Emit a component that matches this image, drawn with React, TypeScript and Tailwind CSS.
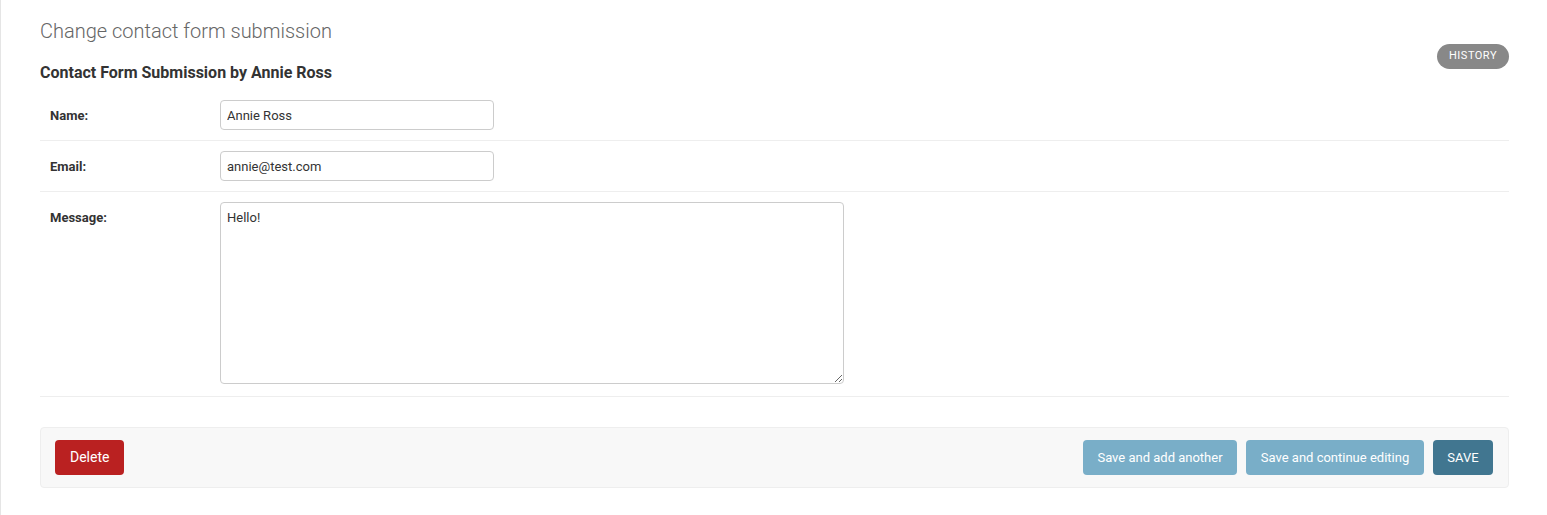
import React from "react";

export default function App() {
  const font = { fontFamily: "Roboto, 'Liberation Sans', sans-serif" };
  return (
    <div
      className="min-h-[515px] bg-white border-l border-[#e5e5e5] pl-[39px] pr-[38px] pt-[18px] text-[#333] text-[13px]"
      style={font}
    >
      <div className="flex justify-between">
        <div className="flex flex-col">
          <h1 className="text-[20px] font-light text-[#666] leading-[26px] m-0">
            Change contact form submission
          </h1>
          <h2 className="text-[16px] font-bold text-[#333] leading-[20px] mt-[19px] m-0">
            Contact Form Submission by Annie Ross
          </h2>
        </div>
        <div className="mt-[26px]">
          <a className="inline-flex items-center h-[25px] px-[12px] rounded-full bg-[#888] text-white text-[11px] tracking-[0.5px] uppercase">
            History
          </a>
        </div>
      </div>

      <div className="mt-[7px]">
        <div className="flex items-start p-[10px] border-b border-[#eee]">
          <label className="w-[170px] h-[30px] pt-[1px] flex items-center font-bold text-[13px] text-[#333]">
            Name:
          </label>
          <input
            readOnly
            value="Annie Ross"
            className="w-[274px] h-[30px] px-[6px] border border-[#ccc] rounded-[4px] text-[13px] text-[#333] outline-none"
            style={font}
          />
        </div>
        <div className="flex items-start p-[10px] border-b border-[#eee]">
          <label className="w-[170px] h-[30px] pt-[1px] flex items-center font-bold text-[13px] text-[#333]">
            Email:
          </label>
          <input
            readOnly
            value="annie@test.com"
            className="w-[274px] h-[30px] px-[6px] border border-[#ccc] rounded-[4px] text-[13px] text-[#333] outline-none"
            style={font}
          />
        </div>
        <div className="flex items-start pt-[10px] pb-[12px] px-[10px] border-b border-[#eee]">
          <label className="w-[170px] h-[30px] pt-[1px] flex items-center font-bold text-[13px] text-[#333]">
            Message:
          </label>
          <textarea
            readOnly
            value="Hello!"
            className="w-[624px] h-[182px] px-[6px] py-[5px] border border-[#ccc] rounded-[4px] text-[13px] text-[#333] outline-none block"
            style={font}
          />
        </div>
      </div>

      <div className="mt-[30px] flex items-center justify-between pl-[14px] pr-[15px] py-[12px] bg-[#f8f8f8] border border-[#eee] rounded-[4px]">
        <button className="h-[35px] px-[15px] rounded-[4px] bg-[#ba2121] text-white text-[14px]" style={font}>
          Delete
        </button>
        <div className="flex gap-[9px]">
          <button className="h-[35px] w-[154px] rounded-[4px] bg-[#79aec8] text-white text-[13px]" style={font}>
            Save and add another
          </button>
          <button className="h-[35px] w-[178px] rounded-[4px] bg-[#79aec8] text-white text-[13px]" style={font}>
            Save and continue editing
          </button>
          <button className="h-[35px] w-[60px] rounded-[4px] bg-[#417690] text-white text-[13px]" style={font}>
            SAVE
          </button>
        </div>
      </div>
    </div>
  );
}
